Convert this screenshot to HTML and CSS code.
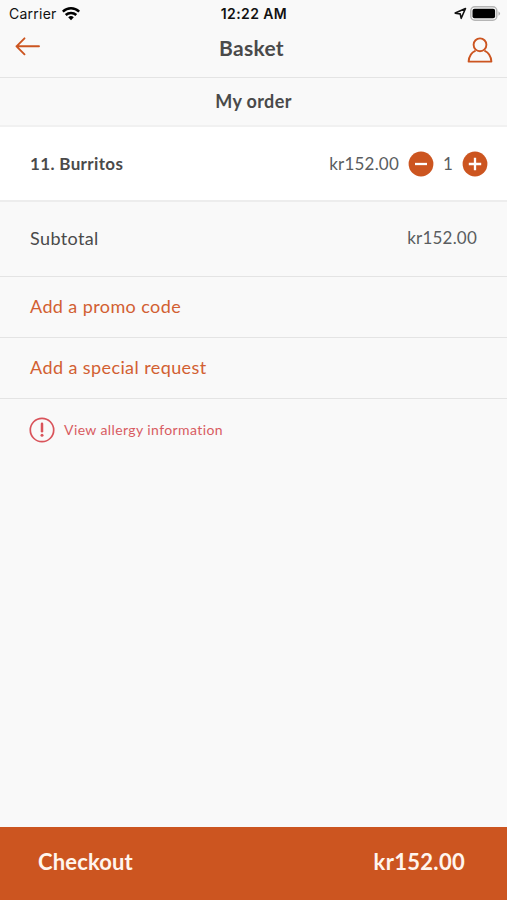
FILE: index.html
```html
<!DOCTYPE html>
<html lang="en">
<head>
<meta charset="utf-8">
<title>Basket</title>
<link rel="stylesheet" href="styles.css">
</head>
<body>
<div class="status">
  <div class="status-left"><span class="carrier">Carrier</span>
    <svg class="wifi" width="18" height="14" viewBox="0 0 18 14" fill="none" stroke="#000" stroke-width="2.5"><path d="M.8 4.700C5.500.2 12.500.2 17.200 4.700M3.700 8C6.700 5.200 11.300 5.200 14.300 8"/><path d="M6.200 10.300Q9 7.900 11.800 10.300L9 13.300z" fill="#000" stroke="none"/></svg>
  </div>
  <time class="clock">12:22 AM</time>
  <div class="status-right">
    <svg width="13" height="13" viewBox="0 0 13 13" fill="none" stroke="#111" stroke-width="1.600" stroke-linejoin="round"><path d="M1.200 6.100 11.500 1.500 7.200 11.300 6.200 6.900z"/></svg>
    <svg width="31" height="15" viewBox="0 0 31 15"><rect x=".8" y=".8" width="26" height="13.400" rx="4" fill="#f9f9f9" stroke="#b5b5b5" stroke-width="1.500"/><rect x="2.500" y="2.700" width="22.600" height="9.600" rx="2" fill="#000"/><path d="M28.500 5.200Q31.500 7.500 28.500 9.800z" fill="#aaa"/></svg>
  </div>
</div>
<header class="nav">
  <svg class="back" width="26" height="20" viewBox="0 0 26 20" fill="none" stroke="#cc5520" stroke-width="1.900" stroke-linecap="round" stroke-linejoin="round"><path d="M24 10.300H1.500M9.500 2.300 1.500 10.300l8 8"/></svg>
  <h1 class="title">Basket</h1>
  <svg class="user" width="26" height="26" viewBox="0 0 26 26" fill="none" stroke="#cc5520" stroke-width="1.900" stroke-linejoin="round"><circle cx="13" cy="7.800" r="6.400"/><path d="M8.600 13.600C4.500 15.400 2 19 1.600 24.600h22.800C24 19 21.500 15.400 17.400 13.600"/></svg>
</header>
<h2 class="heading"><span>My order</span></h2>
<main>
  <div class="item">
    <span class="item-name">11. Burritos</span>
    <span class="price">kr152.00</span>
    <svg class="minus" width="26" height="26" viewBox="0 0 26 26"><circle cx="13" cy="13" r="12.400" fill="#cc5520"/><path d="M7 13h12" stroke="#fff" stroke-width="2.300"/></svg>
    <span class="qty">1</span>
    <svg class="plus" width="26" height="26" viewBox="0 0 26 26"><circle cx="13" cy="13" r="12.400" fill="#cc5520"/><path d="M6.800 13h12.400M13 6.800v12.400" stroke="#fff" stroke-width="2.300"/></svg>
  </div>
  <div class="subtotal"><span class="sub-label">Subtotal</span><span class="price">kr152.00</span></div>
  <div class="action"><span class="promo">Add a promo code</span></div>
  <div class="action"><span class="request">Add a special request</span></div>
  <div class="allergy">
    <svg width="26" height="26" viewBox="0 0 26 26" fill="none" stroke="#d9535a"><circle cx="13" cy="13" r="11.700" stroke-width="1.700"/><path d="M13 6.800v7.400" stroke-width="2.500" stroke-linecap="round"/><circle cx="13" cy="18.300" r="1.500" fill="#d9535a" stroke="none"/></svg>
    <span>View allergy information</span>
  </div>
</main>
<footer class="checkout"><span class="checkout-label">Checkout</span><span class="total">kr152.00</span></footer>
</body>
</html>
```
FILE: styles.css
```css
* { box-sizing: border-box; }
body {
  margin: 0;
  height: 900px;
  display: flex;
  flex-direction: column;
  background: #f9f9f9;
  color: #4a4a4a;
  font-family: Lato, sans-serif;
  font-size: 18px;
  line-height: 24px;
  overflow: hidden;
  white-space: nowrap;
  font-variant-ligatures: none;
}
svg { display: block; flex: none; }
h1, h2 { margin: 0; }
.status {
  height: 27px;
  display: grid;
  grid-template-columns: 1fr auto 1fr;
  align-items: center;
  padding: 0 6px 0 9px;
  font-family: Inter, sans-serif;
  color: #111;
}
.status-left { display: flex; align-items: center; gap: 5px; }
.carrier { font-size: 14px; letter-spacing: .25px; }
.clock { font-size: 14px; font-weight: 600; letter-spacing: .4px; margin-right: 2px; }
.status-right { display: flex; align-items: center; justify-content: flex-end; gap: 3px; }
.nav {
  height: 51px;
  display: grid;
  grid-template-columns: 1fr auto 1fr;
  padding: 9px 14px 0 15px;
  border-bottom: 1px solid #e4e4e4;
}
.title { font-size: 21px; letter-spacing: .3px; margin-right: 5px; }
.user { justify-self: end; margin-top: 1px; }
.heading {
  height: 49px;
  padding-top: 11px;
  text-align: center;
  font-size: 18px;
  letter-spacing: .35px;
  border-bottom: 2px solid #f1f1f1;
}
.item {
  height: 75px;
  display: flex;
  align-items: center;
  padding: 0 19px 0 30px;
  background: #fff;
  border-bottom: 2px solid #ededed;
}
.item-name { flex: 1; font-size: 17px; font-weight: 700; letter-spacing: .35px; }
.price { font-size: 17px; letter-spacing: .2px; color: #5a5d60; }
.minus { margin-left: 9px; }
.qty { width: 28px; text-align: center; font-size: 17px; color: #5a5d60; }
.subtotal {
  height: 75px;
  display: flex;
  justify-content: space-between;
  align-items: center;
  padding: 0 30px 2px 30px;
  border-bottom: 1px solid #e4e4e4;
}
.sub-label { letter-spacing: .38px; }
.action {
  height: 61px;
  display: flex;
  align-items: center;
  padding: 0 0 2px 30px;
  color: #d26032;
  border-bottom: 1px solid #e4e4e4;
}
.promo { letter-spacing: .4px; }
.request { letter-spacing: .41px; }
.allergy {
  height: 61px;
  display: flex;
  align-items: center;
  padding-left: 29px;
  gap: 9px;
  color: #d85c62;
  font-size: 14px;
  letter-spacing: .4px;
}
.checkout {
  height: 73px;
  margin-top: auto;
  display: flex;
  justify-content: space-between;
  align-items: center;
  padding: 0 42px 3px 38px;
  background: #cc5520;
  color: #fff5ee;
  font-size: 22px;
  font-weight: 700;
}
.checkout-label { letter-spacing: .15px; }
.total { letter-spacing: .3px; }
```
